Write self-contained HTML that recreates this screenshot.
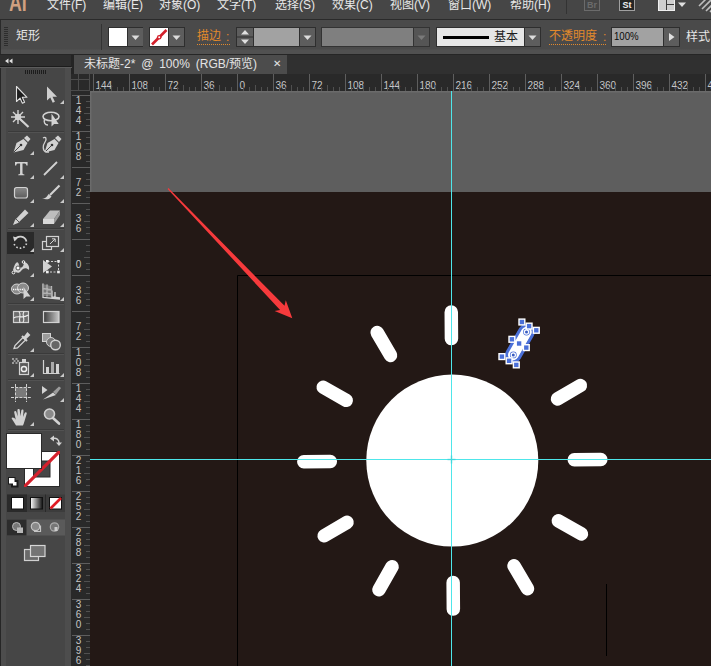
<!DOCTYPE html>
<html lang="zh"><head><meta charset="utf-8"><title>AI</title>
<style>
html,body{margin:0;padding:0}
body{width:711px;height:666px;overflow:hidden;position:relative;background:#231815;font-family:"Liberation Sans","Noto Sans CJK SC",sans-serif;font-size:12px;color:#e6e6e6}
.abs{position:absolute}
#menubar{left:0;top:0;width:711px;height:19px;background:#464646;border-bottom:1px solid #2a2a2a}
#menubar span{position:absolute;top:-3px;line-height:16px;font-size:12px;color:#e8e8e8;white-space:nowrap}
#ctrl{left:0;top:20px;width:711px;height:34px;background:linear-gradient(#4a4a4a 0,#4a4a4a 29px,#515151 30px,#515151 34px);border-bottom:1px solid #262626}
#ctrl .t{position:absolute;font-size:12px;line-height:16px;white-space:nowrap}
#tabbar{left:74px;top:55px;width:637px;height:19px;background:#303030}
#tab{left:74px;top:55px;width:213px;height:19px;background:#4c4c4c;font-size:12px;word-spacing:2.5px;line-height:18px;color:#e4e4e4;white-space:nowrap}
#tools{left:0;top:55px;width:71px;height:611px;background:linear-gradient(90deg,#262626 0,#262626 1px,#4d4d4d 1px,#4d4d4d 6px,#464646 6px,#464646 65px,#4d4d4d 65px,#4d4d4d 71px)}
#toolhdr{left:0;top:55px;width:71px;height:11px;background:#2e2e2e;border-bottom:1px solid #1c1c1c}
#edge{left:71px;top:55px;width:3px;height:19px;background:#242424}
#edge2{left:71px;top:74px;width:0px;height:592px;background:#242424}
</style></head><body>

<svg class="abs" style="left:0;top:0" width="711" height="666" viewBox="0 0 711 666">
<rect x="90" y="91" width="621" height="101" fill="#5e5e5e"/><path d="M90 91.700H711M90.700 91V192" stroke="#6b6b6b" stroke-width="1.400" fill="none"/>
<rect x="90" y="192" width="621" height="474" fill="#231815"/>
<path d="M237.5 666V275.5H711" fill="none" stroke="#000" stroke-width="1"/>
<path d="M606.5 584V656" fill="none" stroke="#000" stroke-width="1"/>
<circle cx="452.3" cy="460.6" r="86" fill="#fff"/>
<rect x="445.55" y="305.35" width="13.5" height="40" rx="6.75" fill="#fff" transform="rotate(-0.4 452.3 460.6)"/>
<rect x="445.55" y="305.35" width="13.5" height="40" rx="6.75" fill="#fff" transform="rotate(29.6 452.3 460.6)"/>
<rect x="445.55" y="305.35" width="13.5" height="40" rx="6.75" fill="#fff" transform="rotate(59.6 452.3 460.6)"/>
<rect x="445.55" y="305.35" width="13.5" height="40" rx="6.75" fill="#fff" transform="rotate(89.6 452.3 460.6)"/>
<rect x="445.55" y="305.35" width="13.5" height="40" rx="6.75" fill="#fff" transform="rotate(119.6 452.3 460.6)"/>
<rect x="445.55" y="305.35" width="13.5" height="40" rx="6.75" fill="#fff" transform="rotate(149.6 452.3 460.6)"/>
<rect x="445.55" y="305.35" width="13.5" height="40" rx="6.75" fill="#fff" transform="rotate(179.6 452.3 460.6)"/>
<rect x="445.55" y="305.35" width="13.5" height="40" rx="6.75" fill="#fff" transform="rotate(209.6 452.3 460.6)"/>
<rect x="445.55" y="305.35" width="13.5" height="40" rx="6.75" fill="#fff" transform="rotate(239.6 452.3 460.6)"/>
<rect x="445.55" y="305.35" width="13.5" height="40" rx="6.75" fill="#fff" transform="rotate(269.6 452.3 460.6)"/>
<rect x="445.55" y="305.35" width="13.5" height="40" rx="6.75" fill="#fff" transform="rotate(299.6 452.3 460.6)"/>
<rect x="445.55" y="305.35" width="13.5" height="40" rx="6.75" fill="#fff" transform="rotate(329.6 452.3 460.6)"/>
<rect x="445.55" y="305.35" width="13.5" height="40" rx="6.75" fill="none" stroke="#4a6fd8" stroke-width="3" transform="rotate(30 452.3 460.6)"/>
<circle cx="513.3" cy="354.9" r="3.4" fill="#4a6fd8"/><circle cx="513.3" cy="354.9" r="2.1" fill="#3a5cc0" stroke="#fff" stroke-width="1.2"/>
<circle cx="526.5" cy="332.0" r="3.4" fill="#4a6fd8"/><circle cx="526.5" cy="332.0" r="2.1" fill="#3a5cc0" stroke="#fff" stroke-width="1.2"/>
<rect x="499.0" y="353.7" width="5.800" height="5.800" fill="#4a6fd8" stroke="#fff" stroke-width="1.400"/>
<rect x="506.2" y="357.9" width="5.800" height="5.800" fill="#4a6fd8" stroke="#fff" stroke-width="1.400"/>
<rect x="513.4" y="362.0" width="5.800" height="5.800" fill="#4a6fd8" stroke="#fff" stroke-width="1.400"/>
<rect x="509.0" y="336.4" width="5.800" height="5.800" fill="#4a6fd8" stroke="#fff" stroke-width="1.400"/>
<rect x="516.2" y="340.6" width="5.800" height="5.800" fill="#4a6fd8" stroke="#fff" stroke-width="1.400"/>
<rect x="523.4" y="344.7" width="5.800" height="5.800" fill="#4a6fd8" stroke="#fff" stroke-width="1.400"/>
<rect x="519.0" y="319.1" width="5.800" height="5.800" fill="#4a6fd8" stroke="#fff" stroke-width="1.400"/>
<rect x="526.2" y="323.2" width="5.800" height="5.800" fill="#4a6fd8" stroke="#fff" stroke-width="1.400"/>
<rect x="533.4" y="327.4" width="5.800" height="5.800" fill="#4a6fd8" stroke="#fff" stroke-width="1.400"/>
<path d="M451.5 91V666M90 459.5H711" stroke="#4ee6ea" stroke-width="1" fill="none"/>
<path d="M447.500 459.500h8M451.500 455.500v8" stroke="#38cfd6" stroke-width="1.600" opacity=".55"/>
<polygon points="168.4,188.1 284.5,305.8 285.8,300.3 292.3,318.3 274.6,311.1 280.1,310 167.6,188.9" fill="#f63a3c"/>
</svg>
<svg class="abs" style="left:71px;top:74px" width="640" height="592" viewBox="71 74 640 592" font-family="Liberation Sans, sans-serif" font-size="10" fill="#c6c6c6">
<rect x="74" y="74" width="637" height="17" fill="#292929"/><rect x="71" y="74" width="19" height="592" fill="#292929"/>
<path d="M71 79.5H90M78.5 74V91" stroke="#4c4c4c" stroke-width="1"/>
<path d="M89.5 74V91M71 90.5H90" stroke="#4a4a4a" stroke-width="1"/>
<path d="M93.5 74V91" stroke="#5e5e5e" stroke-width="1"/>
<text x="95.5" y="88.500">144</text>
<path d="M99.5 87V91" stroke="#505050" stroke-width="1"/>
<path d="M105.5 87V91" stroke="#505050" stroke-width="1"/>
<path d="M111.5 85V91" stroke="#505050" stroke-width="1"/>
<path d="M117.5 87V91" stroke="#505050" stroke-width="1"/>
<path d="M123.5 87V91" stroke="#505050" stroke-width="1"/>
<path d="M129.5 74V91" stroke="#5e5e5e" stroke-width="1"/>
<text x="131.5" y="88.500">108</text>
<path d="M135.5 87V91" stroke="#505050" stroke-width="1"/>
<path d="M141.5 87V91" stroke="#505050" stroke-width="1"/>
<path d="M147.5 85V91" stroke="#505050" stroke-width="1"/>
<path d="M153.5 87V91" stroke="#505050" stroke-width="1"/>
<path d="M159.5 87V91" stroke="#505050" stroke-width="1"/>
<path d="M165.5 74V91" stroke="#5e5e5e" stroke-width="1"/>
<text x="167.5" y="88.500">72</text>
<path d="M171.5 87V91" stroke="#505050" stroke-width="1"/>
<path d="M177.5 87V91" stroke="#505050" stroke-width="1"/>
<path d="M183.5 85V91" stroke="#505050" stroke-width="1"/>
<path d="M189.5 87V91" stroke="#505050" stroke-width="1"/>
<path d="M195.5 87V91" stroke="#505050" stroke-width="1"/>
<path d="M201.5 74V91" stroke="#5e5e5e" stroke-width="1"/>
<text x="203.5" y="88.500">36</text>
<path d="M207.5 87V91" stroke="#505050" stroke-width="1"/>
<path d="M213.5 87V91" stroke="#505050" stroke-width="1"/>
<path d="M219.5 85V91" stroke="#505050" stroke-width="1"/>
<path d="M225.5 87V91" stroke="#505050" stroke-width="1"/>
<path d="M231.5 87V91" stroke="#505050" stroke-width="1"/>
<path d="M237.5 74V91" stroke="#5e5e5e" stroke-width="1"/>
<text x="239.5" y="88.500">0</text>
<path d="M243.5 87V91" stroke="#505050" stroke-width="1"/>
<path d="M249.5 87V91" stroke="#505050" stroke-width="1"/>
<path d="M255.5 85V91" stroke="#505050" stroke-width="1"/>
<path d="M261.5 87V91" stroke="#505050" stroke-width="1"/>
<path d="M267.5 87V91" stroke="#505050" stroke-width="1"/>
<path d="M273.5 74V91" stroke="#5e5e5e" stroke-width="1"/>
<text x="275.5" y="88.500">36</text>
<path d="M279.5 87V91" stroke="#505050" stroke-width="1"/>
<path d="M285.5 87V91" stroke="#505050" stroke-width="1"/>
<path d="M291.5 85V91" stroke="#505050" stroke-width="1"/>
<path d="M297.5 87V91" stroke="#505050" stroke-width="1"/>
<path d="M303.5 87V91" stroke="#505050" stroke-width="1"/>
<path d="M309.5 74V91" stroke="#5e5e5e" stroke-width="1"/>
<text x="311.5" y="88.500">72</text>
<path d="M315.5 87V91" stroke="#505050" stroke-width="1"/>
<path d="M321.5 87V91" stroke="#505050" stroke-width="1"/>
<path d="M327.5 85V91" stroke="#505050" stroke-width="1"/>
<path d="M333.5 87V91" stroke="#505050" stroke-width="1"/>
<path d="M339.5 87V91" stroke="#505050" stroke-width="1"/>
<path d="M345.5 74V91" stroke="#5e5e5e" stroke-width="1"/>
<text x="347.5" y="88.500">108</text>
<path d="M351.5 87V91" stroke="#505050" stroke-width="1"/>
<path d="M357.5 87V91" stroke="#505050" stroke-width="1"/>
<path d="M363.5 85V91" stroke="#505050" stroke-width="1"/>
<path d="M369.5 87V91" stroke="#505050" stroke-width="1"/>
<path d="M375.5 87V91" stroke="#505050" stroke-width="1"/>
<path d="M381.5 74V91" stroke="#5e5e5e" stroke-width="1"/>
<text x="383.5" y="88.500">144</text>
<path d="M387.5 87V91" stroke="#505050" stroke-width="1"/>
<path d="M393.5 87V91" stroke="#505050" stroke-width="1"/>
<path d="M399.5 85V91" stroke="#505050" stroke-width="1"/>
<path d="M405.5 87V91" stroke="#505050" stroke-width="1"/>
<path d="M411.5 87V91" stroke="#505050" stroke-width="1"/>
<path d="M417.5 74V91" stroke="#5e5e5e" stroke-width="1"/>
<text x="419.5" y="88.500">180</text>
<path d="M423.5 87V91" stroke="#505050" stroke-width="1"/>
<path d="M429.5 87V91" stroke="#505050" stroke-width="1"/>
<path d="M435.5 85V91" stroke="#505050" stroke-width="1"/>
<path d="M441.5 87V91" stroke="#505050" stroke-width="1"/>
<path d="M447.5 87V91" stroke="#505050" stroke-width="1"/>
<path d="M453.5 74V91" stroke="#5e5e5e" stroke-width="1"/>
<text x="455.5" y="88.500">216</text>
<path d="M459.5 87V91" stroke="#505050" stroke-width="1"/>
<path d="M465.5 87V91" stroke="#505050" stroke-width="1"/>
<path d="M471.5 85V91" stroke="#505050" stroke-width="1"/>
<path d="M477.5 87V91" stroke="#505050" stroke-width="1"/>
<path d="M483.5 87V91" stroke="#505050" stroke-width="1"/>
<path d="M489.5 74V91" stroke="#5e5e5e" stroke-width="1"/>
<text x="491.5" y="88.500">252</text>
<path d="M495.5 87V91" stroke="#505050" stroke-width="1"/>
<path d="M501.5 87V91" stroke="#505050" stroke-width="1"/>
<path d="M507.5 85V91" stroke="#505050" stroke-width="1"/>
<path d="M513.5 87V91" stroke="#505050" stroke-width="1"/>
<path d="M519.5 87V91" stroke="#505050" stroke-width="1"/>
<path d="M525.5 74V91" stroke="#5e5e5e" stroke-width="1"/>
<text x="527.5" y="88.500">288</text>
<path d="M531.5 87V91" stroke="#505050" stroke-width="1"/>
<path d="M537.5 87V91" stroke="#505050" stroke-width="1"/>
<path d="M543.5 85V91" stroke="#505050" stroke-width="1"/>
<path d="M549.5 87V91" stroke="#505050" stroke-width="1"/>
<path d="M555.5 87V91" stroke="#505050" stroke-width="1"/>
<path d="M561.5 74V91" stroke="#5e5e5e" stroke-width="1"/>
<text x="563.5" y="88.500">324</text>
<path d="M567.5 87V91" stroke="#505050" stroke-width="1"/>
<path d="M573.5 87V91" stroke="#505050" stroke-width="1"/>
<path d="M579.5 85V91" stroke="#505050" stroke-width="1"/>
<path d="M585.5 87V91" stroke="#505050" stroke-width="1"/>
<path d="M591.5 87V91" stroke="#505050" stroke-width="1"/>
<path d="M597.5 74V91" stroke="#5e5e5e" stroke-width="1"/>
<text x="599.5" y="88.500">360</text>
<path d="M603.5 87V91" stroke="#505050" stroke-width="1"/>
<path d="M609.5 87V91" stroke="#505050" stroke-width="1"/>
<path d="M615.5 85V91" stroke="#505050" stroke-width="1"/>
<path d="M621.5 87V91" stroke="#505050" stroke-width="1"/>
<path d="M627.5 87V91" stroke="#505050" stroke-width="1"/>
<path d="M633.5 74V91" stroke="#5e5e5e" stroke-width="1"/>
<text x="635.5" y="88.500">396</text>
<path d="M639.5 87V91" stroke="#505050" stroke-width="1"/>
<path d="M645.5 87V91" stroke="#505050" stroke-width="1"/>
<path d="M651.5 85V91" stroke="#505050" stroke-width="1"/>
<path d="M657.5 87V91" stroke="#505050" stroke-width="1"/>
<path d="M663.5 87V91" stroke="#505050" stroke-width="1"/>
<path d="M669.5 74V91" stroke="#5e5e5e" stroke-width="1"/>
<text x="671.5" y="88.500">432</text>
<path d="M675.5 87V91" stroke="#505050" stroke-width="1"/>
<path d="M681.5 87V91" stroke="#505050" stroke-width="1"/>
<path d="M687.5 85V91" stroke="#505050" stroke-width="1"/>
<path d="M693.5 87V91" stroke="#505050" stroke-width="1"/>
<path d="M699.5 87V91" stroke="#505050" stroke-width="1"/>
<path d="M705.5 74V91" stroke="#5e5e5e" stroke-width="1"/>
<text x="707.5" y="88.500">468</text>
<path d="M72 95.5H90" stroke="#5e5e5e" stroke-width="1"/>
<text x="75.800" y="104.0">1</text>
<text x="75.800" y="113.8">4</text>
<text x="75.800" y="123.6">4</text>
<path d="M86 101.5H90" stroke="#505050" stroke-width="1"/>
<path d="M86 107.5H90" stroke="#505050" stroke-width="1"/>
<path d="M84 113.5H90" stroke="#505050" stroke-width="1"/>
<path d="M86 119.5H90" stroke="#505050" stroke-width="1"/>
<path d="M86 125.5H90" stroke="#505050" stroke-width="1"/>
<path d="M72 131.5H90" stroke="#5e5e5e" stroke-width="1"/>
<text x="75.800" y="140.0">1</text>
<text x="75.800" y="149.8">0</text>
<text x="75.800" y="159.6">8</text>
<path d="M86 137.5H90" stroke="#505050" stroke-width="1"/>
<path d="M86 143.5H90" stroke="#505050" stroke-width="1"/>
<path d="M84 149.5H90" stroke="#505050" stroke-width="1"/>
<path d="M86 155.5H90" stroke="#505050" stroke-width="1"/>
<path d="M86 161.5H90" stroke="#505050" stroke-width="1"/>
<path d="M72 167.5H90" stroke="#5e5e5e" stroke-width="1"/>
<text x="75.800" y="185.8">7</text>
<text x="75.800" y="195.6">2</text>
<path d="M86 173.5H90" stroke="#505050" stroke-width="1"/>
<path d="M86 179.5H90" stroke="#505050" stroke-width="1"/>
<path d="M84 185.5H90" stroke="#505050" stroke-width="1"/>
<path d="M86 191.5H90" stroke="#505050" stroke-width="1"/>
<path d="M86 197.5H90" stroke="#505050" stroke-width="1"/>
<path d="M72 203.5H90" stroke="#5e5e5e" stroke-width="1"/>
<text x="75.800" y="221.8">3</text>
<text x="75.800" y="231.6">6</text>
<path d="M86 209.5H90" stroke="#505050" stroke-width="1"/>
<path d="M86 215.5H90" stroke="#505050" stroke-width="1"/>
<path d="M84 221.5H90" stroke="#505050" stroke-width="1"/>
<path d="M86 227.5H90" stroke="#505050" stroke-width="1"/>
<path d="M86 233.5H90" stroke="#505050" stroke-width="1"/>
<path d="M72 239.5H90" stroke="#5e5e5e" stroke-width="1"/>
<text x="75.800" y="267.6">0</text>
<path d="M86 245.5H90" stroke="#505050" stroke-width="1"/>
<path d="M86 251.5H90" stroke="#505050" stroke-width="1"/>
<path d="M84 257.5H90" stroke="#505050" stroke-width="1"/>
<path d="M86 263.5H90" stroke="#505050" stroke-width="1"/>
<path d="M86 269.5H90" stroke="#505050" stroke-width="1"/>
<path d="M72 275.5H90" stroke="#5e5e5e" stroke-width="1"/>
<text x="75.800" y="293.8">3</text>
<text x="75.800" y="303.6">6</text>
<path d="M86 281.5H90" stroke="#505050" stroke-width="1"/>
<path d="M86 287.5H90" stroke="#505050" stroke-width="1"/>
<path d="M84 293.5H90" stroke="#505050" stroke-width="1"/>
<path d="M86 299.5H90" stroke="#505050" stroke-width="1"/>
<path d="M86 305.5H90" stroke="#505050" stroke-width="1"/>
<path d="M72 311.5H90" stroke="#5e5e5e" stroke-width="1"/>
<text x="75.800" y="329.8">7</text>
<text x="75.800" y="339.6">2</text>
<path d="M86 317.5H90" stroke="#505050" stroke-width="1"/>
<path d="M86 323.5H90" stroke="#505050" stroke-width="1"/>
<path d="M84 329.5H90" stroke="#505050" stroke-width="1"/>
<path d="M86 335.5H90" stroke="#505050" stroke-width="1"/>
<path d="M86 341.5H90" stroke="#505050" stroke-width="1"/>
<path d="M72 347.5H90" stroke="#5e5e5e" stroke-width="1"/>
<text x="75.800" y="356.0">1</text>
<text x="75.800" y="365.8">0</text>
<text x="75.800" y="375.6">8</text>
<path d="M86 353.5H90" stroke="#505050" stroke-width="1"/>
<path d="M86 359.5H90" stroke="#505050" stroke-width="1"/>
<path d="M84 365.5H90" stroke="#505050" stroke-width="1"/>
<path d="M86 371.5H90" stroke="#505050" stroke-width="1"/>
<path d="M86 377.5H90" stroke="#505050" stroke-width="1"/>
<path d="M72 383.5H90" stroke="#5e5e5e" stroke-width="1"/>
<text x="75.800" y="392.0">1</text>
<text x="75.800" y="401.8">4</text>
<text x="75.800" y="411.6">4</text>
<path d="M86 389.5H90" stroke="#505050" stroke-width="1"/>
<path d="M86 395.5H90" stroke="#505050" stroke-width="1"/>
<path d="M84 401.5H90" stroke="#505050" stroke-width="1"/>
<path d="M86 407.5H90" stroke="#505050" stroke-width="1"/>
<path d="M86 413.5H90" stroke="#505050" stroke-width="1"/>
<path d="M72 419.5H90" stroke="#5e5e5e" stroke-width="1"/>
<text x="75.800" y="428.0">1</text>
<text x="75.800" y="437.8">8</text>
<text x="75.800" y="447.6">0</text>
<path d="M86 425.5H90" stroke="#505050" stroke-width="1"/>
<path d="M86 431.5H90" stroke="#505050" stroke-width="1"/>
<path d="M84 437.5H90" stroke="#505050" stroke-width="1"/>
<path d="M86 443.5H90" stroke="#505050" stroke-width="1"/>
<path d="M86 449.5H90" stroke="#505050" stroke-width="1"/>
<path d="M72 455.5H90" stroke="#5e5e5e" stroke-width="1"/>
<text x="75.800" y="464.0">2</text>
<text x="75.800" y="473.8">1</text>
<text x="75.800" y="483.6">6</text>
<path d="M86 461.5H90" stroke="#505050" stroke-width="1"/>
<path d="M86 467.5H90" stroke="#505050" stroke-width="1"/>
<path d="M84 473.5H90" stroke="#505050" stroke-width="1"/>
<path d="M86 479.5H90" stroke="#505050" stroke-width="1"/>
<path d="M86 485.5H90" stroke="#505050" stroke-width="1"/>
<path d="M72 491.5H90" stroke="#5e5e5e" stroke-width="1"/>
<text x="75.800" y="500.0">2</text>
<text x="75.800" y="509.8">5</text>
<text x="75.800" y="519.6">2</text>
<path d="M86 497.5H90" stroke="#505050" stroke-width="1"/>
<path d="M86 503.5H90" stroke="#505050" stroke-width="1"/>
<path d="M84 509.5H90" stroke="#505050" stroke-width="1"/>
<path d="M86 515.5H90" stroke="#505050" stroke-width="1"/>
<path d="M86 521.5H90" stroke="#505050" stroke-width="1"/>
<path d="M72 527.5H90" stroke="#5e5e5e" stroke-width="1"/>
<text x="75.800" y="536.0">2</text>
<text x="75.800" y="545.8">8</text>
<text x="75.800" y="555.6">8</text>
<path d="M86 533.5H90" stroke="#505050" stroke-width="1"/>
<path d="M86 539.5H90" stroke="#505050" stroke-width="1"/>
<path d="M84 545.5H90" stroke="#505050" stroke-width="1"/>
<path d="M86 551.5H90" stroke="#505050" stroke-width="1"/>
<path d="M86 557.5H90" stroke="#505050" stroke-width="1"/>
<path d="M72 563.5H90" stroke="#5e5e5e" stroke-width="1"/>
<text x="75.800" y="572.0">3</text>
<text x="75.800" y="581.8">2</text>
<text x="75.800" y="591.6">4</text>
<path d="M86 569.5H90" stroke="#505050" stroke-width="1"/>
<path d="M86 575.5H90" stroke="#505050" stroke-width="1"/>
<path d="M84 581.5H90" stroke="#505050" stroke-width="1"/>
<path d="M86 587.5H90" stroke="#505050" stroke-width="1"/>
<path d="M86 593.5H90" stroke="#505050" stroke-width="1"/>
<path d="M72 599.5H90" stroke="#5e5e5e" stroke-width="1"/>
<text x="75.800" y="608.0">3</text>
<text x="75.800" y="617.8">6</text>
<text x="75.800" y="627.6">0</text>
<path d="M86 605.5H90" stroke="#505050" stroke-width="1"/>
<path d="M86 611.5H90" stroke="#505050" stroke-width="1"/>
<path d="M84 617.5H90" stroke="#505050" stroke-width="1"/>
<path d="M86 623.5H90" stroke="#505050" stroke-width="1"/>
<path d="M86 629.5H90" stroke="#505050" stroke-width="1"/>
<path d="M72 635.5H90" stroke="#5e5e5e" stroke-width="1"/>
<text x="75.800" y="644.0">3</text>
<text x="75.800" y="653.8">9</text>
<text x="75.800" y="663.6">6</text>
<path d="M86 641.5H90" stroke="#505050" stroke-width="1"/>
<path d="M86 647.5H90" stroke="#505050" stroke-width="1"/>
<path d="M84 653.5H90" stroke="#505050" stroke-width="1"/>
<path d="M86 659.5H90" stroke="#505050" stroke-width="1"/>
<path d="M86 665.5H90" stroke="#505050" stroke-width="1"/>
</svg>
<div id="menubar" class="abs">
<span style="left:8.500px;top:-9px;font-size:24px;line-height:24px;font-weight:bold;color:#d0a080;letter-spacing:0px;transform:scaleX(.74);transform-origin:0 0">AI</span>
<span style="left:47px">文件(F)</span>
<span style="left:103px">编辑(E)</span>
<span style="left:159px">对象(O)</span>
<span style="left:217px">文字(T)</span>
<span style="left:275px">选择(S)</span>
<span style="left:332px">效果(C)</span>
<span style="left:390px">视图(V)</span>
<span style="left:448px">窗口(W)</span>
<span style="left:510px">帮助(H)</span>
<div class="abs" style="left:566px;top:0;width:1px;height:14px;background:#333"></div>
<div class="abs" style="left:584px;top:-5px;width:16px;height:16px;border:1px solid #6b6b6b;box-sizing:border-box;color:#6b6b6b;font-size:9px;font-weight:bold;line-height:18px;text-align:center">Br</div>
<div class="abs" style="left:619px;top:-5px;width:16px;height:16px;border:1px solid #a0a0a0;background:#262626;box-sizing:border-box;color:#eee;font-size:9px;font-weight:bold;line-height:18px;text-align:center">St</div>
<svg class="abs" style="left:658px;top:0" width="53" height="14"><rect x="0.5" y="-3" width="16" height="13.500" fill="#cfcfcf" stroke="#f0f0f0"/><path d="M8.500 -3V10M8.500 4.500H16" stroke="#3a3a3a"/><path d="M20 2.500h8l-4 4.500z" fill="#e0e0e0"/><path d="M41 6l8-8M44 9l9-9M48 11l6-6M52 12l3-3" stroke="#bdbdbd" stroke-width="1.600"/></svg>
</div>
<div id="ctrl" class="abs">
<svg class="abs" style="left:4px;top:7px" width="4" height="20"><path d="M0 .5H4M0 2.5H4M0 4.5H4M0 6.5H4M0 8.5H4M0 10.5H4M0 12.5H4M0 14.5H4M0 16.5H4M0 18.5H4" stroke="#2d2d2d"/></svg>
<div class="abs" style="left:0;top:0;width:1px;height:34px;background:#2a2a2a"></div><span class="t" style="left:16px;top:8px;color:#e6e6e6">矩形</span>
<div class="abs" style="left:101px;top:4px;width:1px;height:26px;background:#333;"></div>
<div class="abs" style="left:108px;top:7px;width:35px;height:20px;background:#2e2e2e;"></div>
<div class="abs" style="left:109px;top:8px;width:18px;height:18px;background:#ffffff;"></div>
<div class="abs" style="left:128px;top:8px;width:15px;height:18px;background:#5d5d5d;"></div>
<svg class="abs" style="left:128px;top:8px" width="15" height="18"><path d="M3.5 7.5h8l-4 4.5z" fill="#dcdcdc"/></svg>
<div class="abs" style="left:149px;top:7px;width:36px;height:20px;background:#2e2e2e;"></div>
<div class="abs" style="left:150px;top:8px;width:18px;height:18px;background:#ffffff;"></div>
<svg class="abs" style="left:150px;top:8px" width="18" height="18"><path d="M2 16.500L16.500 2" stroke="#d3202b" stroke-width="2.600"/><circle cx="9.200" cy="9.200" r="2.300" fill="#d3202b"/><circle cx="9.200" cy="9.200" r="1" fill="#fff"/></svg>
<div class="abs" style="left:169px;top:8px;width:15px;height:18px;background:#5d5d5d;"></div>
<svg class="abs" style="left:169px;top:8px" width="15" height="18"><path d="M3.5 7.5h8l-4 4.5z" fill="#dcdcdc"/></svg>
<span class="t" style="left:197px;top:9px;width:33px;color:#e2892c;border-bottom:1px dotted #e2892c;line-height:15px">描边</span><span class="t" style="left:226px;top:9px;color:#e2892c">:</span>
<div class="abs" style="left:236px;top:7px;width:80px;height:20px;background:#2e2e2e;"></div>
<div class="abs" style="left:237px;top:8px;width:16px;height:18px;background:#5d5d5d;"></div>
<svg class="abs" style="left:237px;top:8px" width="16" height="18"><path d="M0 9H16" stroke="#2e2e2e"/><path d="M4 6.5h8l-4-4.5zM4 11.5h8l-4 4.5z" fill="#e0e0e0"/></svg>
<div class="abs" style="left:254px;top:8px;width:45px;height:18px;background:#a2a2a2;"></div>
<div class="abs" style="left:300px;top:8px;width:15px;height:18px;background:#5d5d5d;"></div>
<svg class="abs" style="left:300px;top:8px" width="15" height="18"><path d="M3.5 7.5h8l-4 4.5z" fill="#dcdcdc"/></svg>
<div class="abs" style="left:321px;top:7px;width:109px;height:20px;background:#333;"></div>
<div class="abs" style="left:322px;top:8px;width:91px;height:18px;background:#7f7f7f;"></div>
<div class="abs" style="left:414px;top:8px;width:15px;height:18px;background:#555;"></div>
<svg class="abs" style="left:414px;top:8px" width="15" height="18"><path d="M3.5 7.5h8l-4 4.5z" fill="#7a7a7a"/></svg>
<div class="abs" style="left:436px;top:7px;width:105px;height:20px;background:#2e2e2e;"></div>
<div class="abs" style="left:437px;top:8px;width:87px;height:18px;background:#e6e6e6;"></div>
<div class="abs" style="left:443px;top:16px;width:46px;height:3px;background:#000;"></div>
<span class="t" style="left:494px;top:9px;color:#1c1c1c">基本</span>
<div class="abs" style="left:525px;top:8px;width:15px;height:18px;background:#5d5d5d;"></div>
<svg class="abs" style="left:525px;top:8px" width="15" height="18"><path d="M3.5 7.5h8l-4 4.5z" fill="#dcdcdc"/></svg>
<span class="t" style="left:549px;top:9px;width:57px;color:#e2892c;border-bottom:1px dotted #e2892c;line-height:15px">不透明度</span><span class="t" style="left:603px;top:9px;color:#e2892c">:</span>
<div class="abs" style="left:611px;top:7px;width:69px;height:20px;background:#2e2e2e;"></div>
<div class="abs" style="left:612px;top:8px;width:51px;height:18px;background:#a2a2a2;"></div>
<span class="t" style="left:614px;top:8px;color:#0a0a0a;font-size:11.500px;transform:scaleX(.84);transform-origin:0 0">100%</span>
<div class="abs" style="left:664px;top:8px;width:15px;height:18px;background:#5d5d5d;"></div>
<svg class="abs" style="left:664px;top:8px" width="15" height="18"><path d="M5 5v8l5.5-4z" fill="#e0e0e0"/></svg>
<span class="t" style="left:686px;top:9px;color:#e6e6e6">样式</span>
</div>
<div id="tabbar" class="abs"></div>
<div id="tab" class="abs"><span class="abs" style="left:10px;top:0">未标题-2* @ 100% (RGB/预览)</span><span class="abs" style="left:199px;top:0px;font-size:10px">✕</span></div>
<div id="tools" class="abs"></div><div id="toolhdr" class="abs"></div><div id="edge" class="abs"></div><div id="edge2" class="abs"></div>
<svg class="abs" style="left:0;top:55px" width="74" height="611" viewBox="0 55 74 611">
<path d="M8.5 58.5v5l-3.5-2.5zM12.5 58.5v5l-3.5-2.5z" fill="#e0e0e0"/>
<path d="M0 67.5H72" stroke="#5c5c5c"/>
<path d="M25.5 70v4M27.5 70v4M29.5 70v4M31.5 70v4M33.5 70v4M35.5 70v4M37.5 70v4M39.5 70v4M41.5 70v4M43.5 70v4M45.5 70v4" stroke="#1c1c1c" stroke-width="1"/>
<path d="M8 131.5H64" stroke="#3a3a3a"/><path d="M8 132.5H64" stroke="#525252"/>
<path d="M8 228.5H64" stroke="#3a3a3a"/><path d="M8 229.5H64" stroke="#525252"/>
<path d="M8 303.5H64" stroke="#3a3a3a"/><path d="M8 304.5H64" stroke="#525252"/>
<path d="M8 353.5H64" stroke="#3a3a3a"/><path d="M8 354.5H64" stroke="#525252"/>
<path d="M8 379.5H64" stroke="#3a3a3a"/><path d="M8 380.5H64" stroke="#525252"/>
<path d="M8 429.5H64" stroke="#3a3a3a"/><path d="M8 430.5H64" stroke="#525252"/>
<path d="M64 104v-4l-4 4z" fill="#c8c8c8"/>
<path d="M34 155v-4l-4 4z" fill="#c8c8c8"/>
<path d="M34 179v-4l-4 4z" fill="#c8c8c8"/>
<path d="M64 179v-4l-4 4z" fill="#c8c8c8"/>
<path d="M34 203v-4l-4 4z" fill="#c8c8c8"/>
<path d="M64 203v-4l-4 4z" fill="#c8c8c8"/>
<path d="M34 227v-4l-4 4z" fill="#c8c8c8"/>
<path d="M64 227v-4l-4 4z" fill="#c8c8c8"/>
<path d="M34 252v-4l-4 4z" fill="#c8c8c8"/>
<path d="M64 252v-4l-4 4z" fill="#c8c8c8"/>
<path d="M34 277v-4l-4 4z" fill="#c8c8c8"/>
<path d="M34 301v-4l-4 4z" fill="#c8c8c8"/>
<path d="M64 301v-4l-4 4z" fill="#c8c8c8"/>
<path d="M34 352v-4l-4 4z" fill="#c8c8c8"/>
<path d="M34 377v-4l-4 4z" fill="#c8c8c8"/>
<path d="M64 377v-4l-4 4z" fill="#c8c8c8"/>
<path d="M64 402v-4l-4 4z" fill="#c8c8c8"/>
<path d="M34 426v-4l-4 4z" fill="#c8c8c8"/>
<path d="M16.5 86.5v15l3.6-3.3 2.3 5 2.2-1-2.3-4.9h4.7z" fill="#1e1e1e" stroke="#e0e0e0" stroke-width="1.1" stroke-linejoin="round"/>
<path d="M47 86.5v14l3.3-3 2.4 5.2 2.2-1-2.4-5h4.5z" fill="#cfcfcf"/>
<path d="M18 110v14M11 117h14M13 112l10 10M23 112l-10 10" stroke="#d2d2d2" stroke-width="1.4"/><circle cx="18" cy="117" r="3.2" fill="#d2d2d2"/><path d="M20 119l8.5 8" stroke="#d2d2d2" stroke-width="2.2"/>
<ellipse cx="51" cy="116.5" rx="8" ry="4.3" fill="none" stroke="#d2d2d2" stroke-width="1.6"/><path d="M45 119c-2 3 0 6 3 6" fill="none" stroke="#d2d2d2" stroke-width="1.4"/><path d="M51.5 113.5v13l2.6-2.5 4.6 0z" fill="#d2d2d2"/>
<g transform="translate(0 0)"><path d="M13.5 152.5l3-9.5 7-4 4 4-4 7z" fill="#d2d2d2"/><path d="M13.5 152.5l7-7" stroke="#444" stroke-width="1"/><circle cx="21" cy="145" r="1.3" fill="#333"/><path d="M24 138l3-2.5 3.5 3.5-2.5 3z" fill="#d2d2d2"/></g>
<g transform="translate(31 0)"><path d="M13.5 152.5l3-9.5 7-4 4 4-4 7z" fill="#d2d2d2"/><path d="M13.5 152.5l7-7" stroke="#444" stroke-width="1"/><circle cx="21" cy="145" r="1.3" fill="#333"/><path d="M24 138l3-2.5 3.5 3.5-2.5 3z" fill="#d2d2d2"/></g>
<path d="M43 138c3-2 4 1 2 4s-3 8 1 10h3" fill="none" stroke="#d2d2d2" stroke-width="1.3"/>
<path d="M15 162h12.6v3.6h-1.2c-.2-1.6-.8-2.1-2.4-2.1h-1.5v9.3c0 1.2.4 1.5 1.9 1.6v.9h-6.2v-.9c1.5-.1 1.9-.4 1.9-1.6v-9.3h-1.5c-1.6 0-2.2.5-2.4 2.1H15z" fill="#d2d2d2"/>
<path d="M44 175L57 162" stroke="#d2d2d2" stroke-width="1.8"/>
<defs><linearGradient id="gr" x1="0" y1="0" x2="0" y2="1"><stop offset="0" stop-color="#8a8a8a"/><stop offset="1" stop-color="#5c5c5c"/></linearGradient><linearGradient id="gh" x1="0" y1="0" x2="1" y2="0"><stop offset="0" stop-color="#3c3c3c"/><stop offset="1" stop-color="#c8c8c8"/></linearGradient><linearGradient id="gw" x1="0" y1="0" x2="1" y2="0"><stop offset="0" stop-color="#fff"/><stop offset="1" stop-color="#111"/></linearGradient></defs>
<rect x="14.5" y="187.5" width="13" height="10.5" rx="2.2" fill="url(#gr)" stroke="#d2d2d2" stroke-width="1.2"/>
<path d="M59.5 185.5L50 195" stroke="#d2d2d2" stroke-width="2.2"/><path d="M42 198.5c4 0 5-2 6.5-4.5l3 2.5c-2 3-5 3.500-9.500 2z" fill="#d2d2d2"/>
<path d="M13 225l2-5 10-10.500 3.500 3.500-10.500 10z" fill="#d2d2d2"/><path d="M16 219l3.500 3.500" stroke="#555" stroke-width="1"/>
<path d="M43 219l7-8.500h10l-6 8.500z" fill="#bdbdbd"/><path d="M43 219h11v5h-11z" fill="#d8d8d8"/><path d="M54 219l6-8.500v4.500l-6 9z" fill="#9a9a9a"/>
<rect x="7" y="232" width="27" height="22" fill="#2a2a2a"/>
<path d="M14.500 240a6.500 6.500 0 0 1 12 1.500" fill="none" stroke="#d2d2d2" stroke-width="1.700"/><path d="M13 236.500l5 1.200-3.600 3.800z" fill="#d2d2d2"/><path d="M26.500 243.500a6.500 6.500 0 0 1-12.500 0" fill="none" stroke="#d2d2d2" stroke-width="1.700" stroke-dasharray="1.600 2"/>
<path d="M34 252v-4l-4 4z" fill="#c8c8c8"/>
<rect x="42.500" y="241.500" width="9" height="8" fill="none" stroke="#d2d2d2" stroke-width="1.200"/><rect x="46.500" y="236.500" width="12" height="10" fill="#464646" stroke="#d2d2d2" stroke-width="1.200"/><path d="M50 244l5-5M52 238.800h3.200v3.200" fill="none" stroke="#d2d2d2" stroke-width="1"/>
<path d="M13 270c2-8 5-10 6-5s5 2 5-3c3 0 6 4 5 8-3-3-6-2-8 1s-5 2-8-1z" fill="#d2d2d2"/><circle cx="18" cy="268" r="2" fill="#fff" stroke="#333" stroke-width=".8"/><circle cx="13.500" cy="272.500" r="1.400" fill="none" stroke="#fff" stroke-width=".9"/><circle cx="23.500" cy="262" r="1.300" fill="none" stroke="#fff" stroke-width=".9"/>
<path d="M43 260v13l9-6.500z" fill="#d2d2d2"/><rect x="47.500" y="261.500" width="11" height="10.500" fill="none" stroke="#d2d2d2" stroke-width="1" stroke-dasharray="2 1.500"/><rect x="46" y="260" width="2.600" height="2.600" fill="#eee"/><rect x="57.200" y="260" width="2.600" height="2.600" fill="#eee"/><rect x="57.200" y="270.700" width="2.600" height="2.600" fill="#eee"/><rect x="46" y="270.700" width="2.600" height="2.600" fill="#eee"/>
<ellipse cx="17" cy="289" rx="5.500" ry="5" fill="#8a8a8a" stroke="#d2d2d2" stroke-width="1"/><ellipse cx="23" cy="288" rx="5.500" ry="5" fill="#8a8a8a" stroke="#d2d2d2" stroke-width="1"/><path d="M13 289.500h10" stroke="#fff" stroke-width="1.600" stroke-dasharray="1.200 1"/><path d="M23.500 287v12l2.800-2.600h4.200z" fill="#d2d2d2"/>
<path d="M43 283.500v14l17 1.500M47 284.500v12M51.500 286v10.500M43 288.500l9 1.500M43 293l9 .8M52 290.500v6.500l8 1M55 292v5.500" fill="none" stroke="#d2d2d2" stroke-width="1.300"/><path d="M43 284l9 2.500v10l-9-.5z" fill="#9a9a9a" opacity=".6"/>
<rect x="13.500" y="311.500" width="15" height="11" fill="#6e6e6e" stroke="#d2d2d2" stroke-width="1.200"/><path d="M13.500 318c5-3 9 1 15-3M19 311.500c3 4-1 7 1 11M24 311.500c-3 4 2 7-1 11" fill="none" stroke="#eee" stroke-width="1.100"/>
<rect x="43.500" y="311.500" width="15.500" height="11" fill="url(#gh)" stroke="#d2d2d2" stroke-width="1.200"/>
<path d="M14 348.500l1-3 8-8 2.500 2.500-8 8z" fill="none" stroke="#d2d2d2" stroke-width="1.300"/><path d="M22 336l5 5M24 338l3.500-4.500 1.500 1.500-4 3.800z" stroke="#d2d2d2" stroke-width="2" fill="#d2d2d2"/>
<rect x="42.500" y="333.500" width="8" height="8" fill="#9a9a9a" stroke="#d2d2d2" stroke-width="1"/><circle cx="51" cy="342" r="4.500" fill="#777" stroke="#d2d2d2" stroke-width="1"/><circle cx="55.500" cy="345" r="4.800" fill="#666" stroke="#d2d2d2" stroke-width="1.400"/>
<rect x="19.500" y="362.500" width="9" height="12" fill="#5a5a5a" stroke="#d2d2d2" stroke-width="1.200"/><rect x="22" y="359" width="4" height="3" fill="#d2d2d2"/><circle cx="24" cy="369" r="2.600" fill="none" stroke="#eee" stroke-width="1.500"/><path d="M12 359h2M15.500 359h2M13.500 361h2M17 361h2M12 363h2M15.500 363h2" stroke="#eee" stroke-width="1.200"/>
<path d="M43.500 360v13.500h16" fill="none" stroke="#d2d2d2" stroke-width="1.200"/><rect x="46" y="367" width="3" height="6" fill="#d2d2d2"/><rect x="51" y="362" width="3" height="11" fill="#aaa"/><rect x="56" y="364" width="3" height="9" fill="#d2d2d2"/>
<rect x="15.500" y="387.500" width="11" height="10" fill="#7a7a7a"/><path d="M15.500 384v18M26.500 384v18M11 387.500h20M11 397.500h20" stroke="#d2d2d2" stroke-width="1" stroke-dasharray="3 1.200"/>
<path d="M42 386v8l5.500-4z" fill="#d2d2d2"/><path d="M43 399.500l10-7 3 2.500z" fill="#d2d2d2"/><path d="M53 392l6-5.500 2 1.500-5 6.500z" fill="#9c9c9c"/>
<path d="M16 425.500c-1.500-3-3.500-5-4.500-7.500 1.200-1.200 3-.300 4.300 1.800l-1.600-7.300c-.300-1.500 1.800-2 2.200-.500l1.300 4.500-.300-6.200c0-1.500 2.200-1.600 2.400-.100l.600 6 .900-5.600c.300-1.500 2.400-1.200 2.200.300l-.500 6 1.700-3.900c.600-1.400 2.500-.600 2 .800l-2 6.700c-.600 2.400-1.200 3.600-1.700 5z" fill="#d2d2d2"/>
<circle cx="49.500" cy="414" r="5" fill="#8a8a8a" stroke="#d2d2d2" stroke-width="1.600"/><path d="M53 418l6 5.500" stroke="#d2d2d2" stroke-width="2.600" stroke-linecap="round"/>
<rect x="24.500" y="451.500" width="35" height="35" fill="#fff" stroke="#2a2a2a"/><rect x="33.500" y="461" width="16.500" height="16" fill="#464646" stroke="#2a2a2a"/>
<svg x="24" y="451" width="36" height="36" viewBox="24 451 36 36"><path d="M24 487L60 451" stroke="#d5202c" stroke-width="3.200"/></svg>
<rect x="6.500" y="433.500" width="35" height="35" fill="#fff" stroke="#2a2a2a"/>
<path d="M52.500 438.500c4-1 6.500 1 6.500 4.500" fill="none" stroke="#d2d2d2" stroke-width="1.500"/><path d="M50 438.500l4-3v6zM59 446l-3-3.500h6z" fill="#d2d2d2"/>
<rect x="11.500" y="480.500" width="6.500" height="6.500" fill="#1a1a1a" stroke="#1a1a1a"/><rect x="8.500" y="477.500" width="6.500" height="6.500" fill="#fff" stroke="#1a1a1a"/><rect x="13" y="482" width="3.500" height="3.500" fill="#fff"/>
<rect x="7" y="494.500" width="58" height="17.500" fill="#3c3c3c"/><rect x="7" y="494.500" width="19.500" height="17.500" fill="#2a2a2a"/><path d="M26.500 494.500v17.500M45.500 494.500v17.500" stroke="#2a2a2a"/>
<rect x="11.500" y="497.500" width="12" height="11.500" fill="#fff" stroke="#111"/>
<rect x="30.500" y="497.500" width="12" height="11.500" fill="url(#gw)" stroke="#111"/>
<rect x="49.500" y="497.500" width="12" height="11.500" fill="#fff" stroke="#111"/><path d="M50.500 508.500L61 498" stroke="#e01b24" stroke-width="2.600"/>
<rect x="7" y="519.500" width="58" height="16" fill="#5a5a5a"/><rect x="7" y="519.500" width="19.500" height="16" fill="#2c2c2c"/>
<circle cx="16.500" cy="526.500" r="4" fill="#777" stroke="#bbb" stroke-width="1"/><rect x="17" y="527.500" width="6" height="5.500" fill="#b8b8b8"/>
<circle cx="35.500" cy="526.500" r="4.200" fill="#8a8a8a" stroke="#c4c4c4" stroke-width="1.200"/><path d="M34 531.500h6.500v-6" fill="none" stroke="#c4c4c4" stroke-width="1.200"/>
<circle cx="54.500" cy="527" r="4.200" fill="#777" stroke="#aaa" stroke-width="1.200"/><path d="M54.500 527v4h3v-4z" fill="#ccc"/>
<rect x="24.500" y="549.500" width="14" height="11" fill="#6a6a6a" stroke="#d0d0d0" stroke-width="1.200"/><rect x="30.500" y="545.500" width="14.500" height="11" fill="#747474" stroke="#d6d6d6" stroke-width="1.200"/>
</svg>
</body></html>
